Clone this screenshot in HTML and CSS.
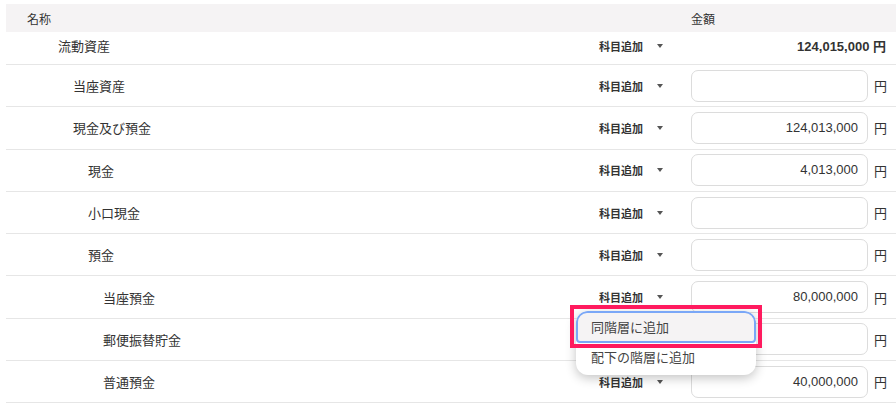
FILE: index.html
```html
<!DOCTYPE html>
<html lang="ja">
<head>
<meta charset="utf-8">
<link rel="stylesheet" href="styles.css">
</head>
<body>
<div class="table">
  <div class="head">
    <div class="h-name">名称</div>
    <div class="h-act"></div>
    <div class="h-amt">金額</div>
  </div>

  <div class="row row-top">
    <div class="name lv1">流動資産</div>
    <div class="act"><span>科目追加</span><i class="caret"></i></div>
    <div class="total">124,015,000 円</div>
  </div>

  <div class="row">
    <div class="name lv2">当座資産</div>
    <div class="act"><span>科目追加</span><i class="caret"></i></div>
    <div class="amt"><div class="input"></div></div>
    <div class="yen">円</div>
  </div>

  <div class="row">
    <div class="name lv2">現金及び預金</div>
    <div class="act"><span>科目追加</span><i class="caret"></i></div>
    <div class="amt"><div class="input">124,013,000</div></div>
    <div class="yen">円</div>
  </div>

  <div class="row">
    <div class="name lv3">現金</div>
    <div class="act"><span>科目追加</span><i class="caret"></i></div>
    <div class="amt"><div class="input">4,013,000</div></div>
    <div class="yen">円</div>
  </div>

  <div class="row">
    <div class="name lv3">小口現金</div>
    <div class="act"><span>科目追加</span><i class="caret"></i></div>
    <div class="amt"><div class="input"></div></div>
    <div class="yen">円</div>
  </div>

  <div class="row">
    <div class="name lv3">預金</div>
    <div class="act"><span>科目追加</span><i class="caret"></i></div>
    <div class="amt"><div class="input"></div></div>
    <div class="yen">円</div>
  </div>

  <div class="row">
    <div class="name lv4">当座預金</div>
    <div class="act"><span>科目追加</span><i class="caret"></i></div>
    <div class="amt"><div class="input">80,000,000</div></div>
    <div class="yen">円</div>
  </div>

  <div class="row">
    <div class="name lv4">郵便振替貯金</div>
    <div class="act"><span>科目追加</span><i class="caret"></i></div>
    <div class="amt"><div class="input"></div></div>
    <div class="yen">円</div>
  </div>

  <div class="row">
    <div class="name lv4">普通預金</div>
    <div class="act"><span>科目追加</span><i class="caret"></i></div>
    <div class="amt"><div class="input">40,000,000</div></div>
    <div class="yen">円</div>
  </div>

  <div class="menu">
    <div class="item active">同階層に追加</div>
    <div class="item">配下の階層に追加</div>
  </div>
  <div class="highlight"></div>
</div>
</body>
</html>
```

FILE: styles.css
```css
* { box-sizing: border-box; }
html, body { margin: 0; padding: 0; background: #fff; }
body {
  font-family: "Liberation Sans", "Noto Sans CJK JP", sans-serif;
  color: #333;
  font-size: 13px;
  padding: 4px 0 0 6px;
  overflow: hidden;
}
.table { position: relative; width: 890px; }
.head {
  display: grid;
  grid-template-columns: 593px 92px 205px;
  height: 28px;
  align-items: center;
  background: #f5f3f4;
  font-size: 12px;
}
.h-name { padding-left: 21px; }
.h-amt { padding-left: 0px; }
.row {
  display: grid;
  grid-template-columns: 593px 92px 177px 28px;
  align-items: center;
  height: 42.3px;
  border-bottom: 1px solid #e6e6e6;
}
.row-top { grid-template-columns: 593px 92px 205px; height: 33px; }
.name { white-space: nowrap; }
.lv1 { padding-left: 52px; margin-top: -5px; }
.lv2 { padding-left: 67px; }
.lv3 { padding-left: 82px; }
.lv4 { padding-left: 97px; }
.act {
  display: flex;
  align-items: center;
  font-size: 11px;
  font-weight: bold;
  color: #333;
}
.row-top .act { margin-top: -5px; }
.caret {
  width: 0; height: 0;
  margin-left: 14px;
  border-left: 3.5px solid transparent;
  border-right: 3.5px solid transparent;
  border-top: 4px solid #555;
}
.total {
  text-align: right;
  padding-right: 10px;
  font-weight: bold;
  font-size: 13px;
  margin-top: -5px;
}
.amt { padding: 0; }
.input {
  height: 32px;
  border: 1px solid #dcdcdc;
  border-radius: 7px;
  text-align: right;
  padding: 0 9px;
  line-height: 30px;
  font-size: 13px;
  color: #333;
}
.yen { padding-left: 6px; font-size: 13px; }
.menu {
  position: absolute;
  left: 570px;
  top: 307px;
  width: 180px;
  background: #fff;
  border-radius: 12px;
  box-shadow: 0 3px 11px rgba(0,0,0,0.24);
  overflow: hidden;
}
.item {
  height: 32px;
  line-height: 30px;
  padding-left: 15px;
  font-size: 13px;
  color: #444;
}
.item.active {
  background: #f5f3f4;
  border: 2px solid #7aa7f7;
  border-radius: 11px 11px 4px 4px;
  padding-left: 13px;
}
.highlight {
  position: absolute;
  left: 564px;
  top: 301px;
  width: 192px;
  height: 43px;
  border: 4px solid #ff1a5e;
}
```
